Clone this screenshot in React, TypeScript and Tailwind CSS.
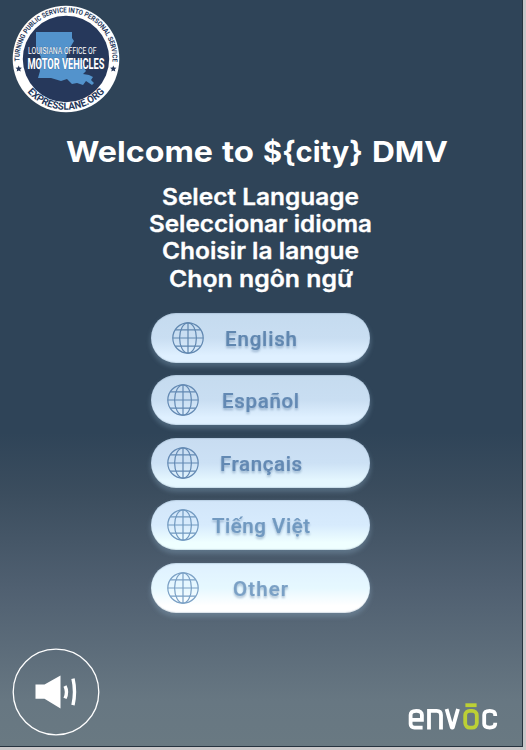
const languages = [
  { name: "English", icon: "left-[21px]", text: "left-[73.5px]", width: 72, bg: "from-[#c5dbef] via-[#c9def2] to-[#dff0ff]", ink: "#6087b0" },
  { name: "Español", icon: "left-[16px]", text: "left-[71px]", width: 77, bg: "from-[#c5dbef] via-[#c9def2] to-[#dff0ff]", ink: "#6389b3" },
  { name: "Français", icon: "left-[16px]", text: "left-[68.5px]", width: 82, bg: "from-[#c8dcf1] via-[#cce1f5] to-[#e5f7ff]", ink: "#6389b3" },
  { name: "Tiếng Việt", icon: "left-[16px]", text: "left-[60.5px]", width: 98, bg: "from-[#d2e6f9] via-[#d7ebfd] to-[#efffff]", ink: "#7199c0" },
  { name: "Other", icon: "left-[16px]", text: "left-[82px]", width: 55, bg: "from-[#dff1ff] via-[#e6f8ff] to-[#ffffff]", ink: "#7aa0c5" },
];

const titleWords = [
  { text: "Welcome", x: 0, width: 147 },
  { text: "to", x: 156, width: 32 },
  { text: "${city}", x: 197, width: 100 },
  { text: "DMV", x: 306, width: 76 },
];

const prompts = [
  { text: "Select Language", width: 197 },
  { text: "Seleccionar idioma", width: 223 },
  { text: "Choisir la langue", width: 197 },
  { text: "Chọn ngôn ngữ", width: 184 },
];

function Globe({ color }: { color: string }) {
  return (
    <svg width="32" height="32" viewBox="0 0 32 32" fill="none" stroke={color} strokeWidth="1.2">
      <circle cx="16" cy="16" r="15.2" />
      <path d="M16 .8v30.4M.8 16h30.4M3.2 7.8h25.6M3.2 24.2h25.6" />
      <ellipse cx="16" cy="16" rx="8.4" ry="15.2" />
    </svg>
  );
}

function Seal() {
  return (
    <svg width="108" height="108" viewBox="0 0 108 108" className="block overflow-visible">
      <defs>
        <path id="upper" d="M9.1 66 A46.5 46.5 0 1 1 98.9 66" />
        <path id="lower" d="M3.2 54 A50.8 50.8 0 0 0 104.8 54" />
      </defs>
      <circle cx="54" cy="54" r="53.3" fill="#fff" />
      <circle cx="54" cy="54" r="43.2" fill="#26385b" />
      <path
        d="M24 27H60V33L62 36 59 41 55 48 54 55H71L70 60 74 66 71 69 77 70 81 72 79 75 82 78 80 80 74 76 71 80 65 78 60 79 55 74 49 76 39 73 26 73 28 66 26 58 29 52 24 43Z"
        fill="#5393cc"
      />
      <g fill="#26385b" fontFamily="Roboto, sans-serif" fontWeight="700">
        <text fontSize="7">
          <textPath href="#upper" startOffset="10" textLength="151" lengthAdjust="spacingAndGlyphs">TURNING PUBLIC SERVICE INTO PERSONAL SERVICE</textPath>
        </text>
        <text fontSize="10" textAnchor="middle">
          <textPath href="#lower" startOffset="50%" textLength="88" lengthAdjust="spacingAndGlyphs">EXPRESSLANE.ORG</textPath>
        </text>
        <path d="M6.7 60.5l.9 2.1 2.3.2-1.7 1.5.5 2.3-2-1.2-2 1.2.5-2.3-1.7-1.5 2.3-.2zM101.3 60.5l.9 2.1 2.3.2-1.7 1.5.5 2.3-2-1.2-2 1.2.5-2.3-1.7-1.5 2.3-.2z" />
      </g>
      <g fill="#fff" stroke="#26385b" strokeOpacity=".6" strokeWidth=".6" paintOrder="stroke" fontFamily="Roboto, sans-serif">
        <text x="16" y="49.3" fontSize="9" textLength="68.5" lengthAdjust="spacingAndGlyphs">LOUISIANA OFFICE OF</text>
        <text x="15.5" y="64" fontSize="14" fontWeight="700" textLength="77" lengthAdjust="spacingAndGlyphs">MOTOR VEHICLES</text>
      </g>
    </svg>
  );
}

export default function App() {
  return (
    <div className="h-[750px] w-[526px] overflow-hidden bg-[#c9c7c9] pr-[3.5px] pb-[3.5px]">
      <main className="relative flex h-full flex-col items-center border-r border-b border-[#26333f] bg-[linear-gradient(to_bottom,#2f4458_0%,#2f4458_58%,#3b4d5e_66%,#506071_79%,#677782_94%,#697982_100%)] font-['Inter','Noto_Sans',sans-serif] text-white">
        <header className="h-[132px] w-full pt-[5px] pl-[12px]">
          <Seal />
        </header>
        <h1 className="-ml-2 h-[50.5px]">
          <svg width="382" height="42" className="block overflow-visible" fill="white">
            <text y="30" fontSize="29" fontWeight="700">
              {titleWords.map((w) => (
                <tspan key={w.text} x={w.x} textLength={w.width} lengthAdjust="spacingAndGlyphs">{w.text}</tspan>
              ))}
            </text>
          </svg>
        </h1>
        <div className="flex h-[130px] flex-col items-center">
          {prompts.map((p) => (
            <svg key={p.text} width={p.width} height="27.4" className="block shrink-0 overflow-visible" fill="white" stroke="white" strokeWidth=".3">
              <text x="0" y="21.8" fontSize="22.5" fontWeight="600" textLength={p.width} lengthAdjust="spacingAndGlyphs">{p.text}</text>
            </svg>
          ))}
        </div>
        <nav className="flex flex-col gap-[12.5px]">
          {languages.map((l) => (
            <button
              key={l.name}
              className={`relative h-[50px] w-[219px] rounded-full bg-linear-to-b from-0% via-50% to-85% ${l.bg} shadow-[0_3px_4px_1px_rgba(160,195,220,0.26),inset_0_1px_1px_rgba(130,155,180,0.3),inset_0_-1px_1px_rgba(130,155,180,0.3)]`}
            >
              <span className={`absolute top-[9px] ${l.icon}`}><Globe color={l.ink} /></span>
              <span className={`absolute top-[10px] ${l.text}`}>
                <svg width={l.width} height="32" fill={l.ink} stroke={l.ink} strokeWidth=".2" className="block overflow-visible font-[Roboto] drop-shadow-[0_2px_1px_rgba(80,115,155,0.45)]">
                  <text x="0" y="23" fontSize="20.5" fontWeight="500" textLength={l.width}>{l.name}</text>
                </svg>
              </span>
            </button>
          ))}
        </nav>
        <footer className="mt-auto flex w-full items-end justify-between pr-[24px] pb-[10px] pl-[12px]">
          <button aria-label="Sound">
            <svg width="88" height="88" viewBox="0 0 88 88" className="block" fill="white">
              <circle cx="44" cy="44" r="42.8" fill="none" stroke="#fff" strokeWidth="1.3" />
              <path d="M23.5 36.5h9L48.5 27.5v33L32.5 50.8h-9z" />
              <path d="M53 38q3 6 0 12.4" fill="none" stroke="#fff" strokeWidth="3.4" />
              <path d="M61 30.6q3 13 0 26.6" fill="none" stroke="#fff" strokeWidth="3.4" />
            </svg>
          </button>
          <svg width="90" height="38" viewBox="0 0 90 38" className="block" fill="none" stroke="#fff" strokeWidth="3.8" role="img" aria-label="envoc">
            <path d="M14.6 29.6H6.5Q2.6 29.6 2.6 26V17Q2.6 12.9 8.3 12.9T13.9 17V21.9H2.6" />
            <path d="M21 31.5V12.9H28.7Q33 12.9 33 17V31.5" />
            <path d="M38.6 11L43.8 29.5H44.8L50 11" strokeLinejoin="round" />
            <rect x="57.2" y="12.9" width="11.6" height="16.7" rx="4.5" stroke="#bcd035" />
            <path d="M57.4 7.2h11.2" stroke="#bcd035" />
            <path d="M87.2 18V17Q87.2 12.9 81.7 12.9T76.2 17V25.8Q76.2 29.6 81.7 29.6T87.2 25.8V24.8" />
          </svg>
        </footer>
      </main>
    </div>
  );
}
